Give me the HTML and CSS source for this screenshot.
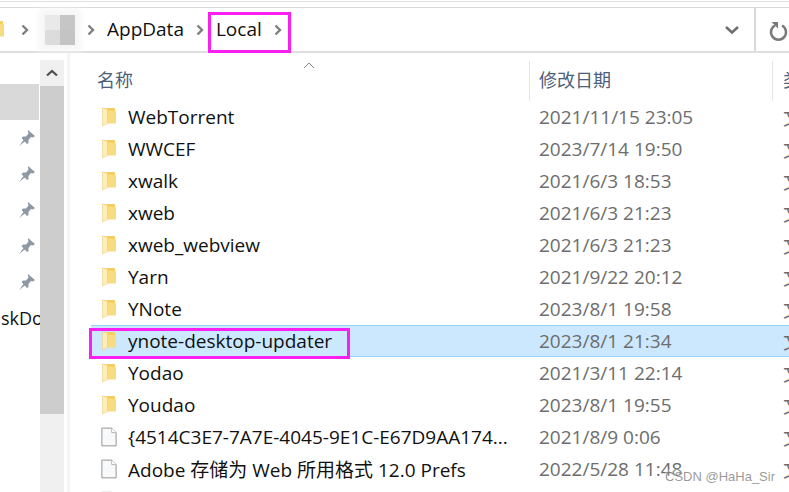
FILE: index.html
```html
<!DOCTYPE html>
<html lang="en">
<head>
  <meta charset="UTF-8" />
  <title>Local</title>
  <link rel="stylesheet" href="styles.css">
</head>
<body>
  <svg width="0" height="0" class="defs">
    <symbol id="folder" viewBox="0 0 16 20">
      <path d="M2 1h12v15H2z" fill="#f5d061"/>
      <path d="M6 4h9v12.500H6z" fill="#f8dc82"/>
      <path d="M1.500 1l5 1v14.500l-5 2.500z" fill="#fdeebc" stroke="#e8c66a" stroke-width=".5"/>
    </symbol>
    <symbol id="file" viewBox="0 0 18 22">
      <path d="M1 1h11l5 5v15H1z" fill="#f8f9fa" stroke="#8a8a8a"/>
      <path d="M12 1v5h5" fill="#fff" stroke="#b0b0b0"/>
    </symbol>
    <symbol id="pin" viewBox="0 0 16 16">
      <path d="M0 16l5-6.500 1.500 1.500zM9 0l7 6-2 1.500-2-.5-2.500 3v3L8 14 2.500 8 4 6.500h3l2.500-3L9 2z" fill="#8f99a3"/>
    </symbol>
    <symbol id="chev" viewBox="0 0 8 12">
      <path d="M1.500 1.500L6 6l-4.500 4.500" fill="none" stroke="#7f7f7f" stroke-width="2.400"/>
    </symbol>
  </svg>

  <div class="window">
    <div class="titlebar"></div>

    <div class="addressbar">
      <div class="crumbs">
        <svg class="crumb-folder" width="16" height="20"><use href="#folder"/></svg>
        <svg class="chev first" width="8" height="12"><use href="#chev"/></svg>
        <div class="blur">
          <i class="b1"></i><i class="b2"></i><i class="b3"></i><i class="b4"></i>
        </div>
        <svg class="chev" width="8" height="12"><use href="#chev"/></svg>
        <span class="crumb">AppData</span>
        <svg class="chev" width="8" height="12"><use href="#chev"/></svg>
        <span class="crumb">Local</span>
        <svg class="chev" width="8" height="12"><use href="#chev"/></svg>
      </div>
      <svg class="dropdown" width="16" height="10" viewBox="0 0 16 10"><path d="M2 2l6 5.500L14 2" fill="none" stroke="#6f6f6f" stroke-width="2.600"/></svg>
      <div class="refresh">
        <svg width="20" height="22" viewBox="0 0 20 22"><path d="M6 6.500a7.500 7.500 0 1 0 7 0" fill="none" stroke="#7a7a7a" stroke-width="2.500"/><path d="M2.500 3h6.500v6.500z" fill="#7a7a7a"/></svg>
      </div>
    </div>

    <div class="main">
      <div class="sidebar">
        <div class="side-row active"></div>
        <div class="side-row"><svg width="16" height="16"><use href="#pin"/></svg></div>
        <div class="side-row"><svg width="16" height="16"><use href="#pin"/></svg></div>
        <div class="side-row"><svg width="16" height="16"><use href="#pin"/></svg></div>
        <div class="side-row"><svg width="16" height="16"><use href="#pin"/></svg></div>
        <div class="side-row"><svg width="16" height="16"><use href="#pin"/></svg></div>
        <div class="side-row label">skDocs</div>
      </div>

      <div class="scrollbar">
        <div class="scroll-btn">
          <svg width="12" height="8" viewBox="0 0 12 8"><path d="M1 6.500L6 2l5 4.500" fill="none" stroke="#505050" stroke-width="2.200"/></svg>
        </div>
        <div class="scroll-thumb"></div>
      </div>

      <div class="list">
        <div class="list-head">
          <div class="col-name">名称
            <svg class="sort" width="12" height="7" viewBox="0 0 12 7"><path d="M1 6l5-5 5 5" fill="none" stroke="#8a8a8a"/></svg>
          </div>
          <div class="col-date">修改日期</div>
          <div class="col-type">类型</div>
        </div>

        <div class="row"><svg class="icon" width="16" height="20"><use href="#folder"/></svg><span class="name">WebTorrent</span><span class="date">2021/11/15 23:05</span><span class="type">文件夹</span></div>
        <div class="row"><svg class="icon" width="16" height="20"><use href="#folder"/></svg><span class="name">WWCEF</span><span class="date">2023/7/14 19:50</span><span class="type">文件夹</span></div>
        <div class="row"><svg class="icon" width="16" height="20"><use href="#folder"/></svg><span class="name">xwalk</span><span class="date">2021/6/3 18:53</span><span class="type">文件夹</span></div>
        <div class="row"><svg class="icon" width="16" height="20"><use href="#folder"/></svg><span class="name">xweb</span><span class="date">2021/6/3 21:23</span><span class="type">文件夹</span></div>
        <div class="row"><svg class="icon" width="16" height="20"><use href="#folder"/></svg><span class="name">xweb_webview</span><span class="date">2021/6/3 21:23</span><span class="type">文件夹</span></div>
        <div class="row"><svg class="icon" width="16" height="20"><use href="#folder"/></svg><span class="name">Yarn</span><span class="date">2021/9/22 20:12</span><span class="type">文件夹</span></div>
        <div class="row"><svg class="icon" width="16" height="20"><use href="#folder"/></svg><span class="name">YNote</span><span class="date">2023/8/1 19:58</span><span class="type">文件夹</span></div>
        <div class="row selected"><svg class="icon" width="16" height="20"><use href="#folder"/></svg><span class="name">ynote-desktop-updater</span><span class="date">2023/8/1 21:34</span><span class="type">文件夹</span></div>
        <div class="row"><svg class="icon" width="16" height="20"><use href="#folder"/></svg><span class="name">Yodao</span><span class="date">2021/3/11 22:14</span><span class="type">文件夹</span></div>
        <div class="row"><svg class="icon" width="16" height="20"><use href="#folder"/></svg><span class="name">Youdao</span><span class="date">2023/8/1 19:55</span><span class="type">文件夹</span></div>
        <div class="row"><svg class="icon" width="18" height="22"><use href="#file"/></svg><span class="name">{4514C3E7-7A7E-4045-9E1C-E67D9AA174...</span><span class="date">2021/8/9 0:06</span><span class="type">文件</span></div>
        <div class="row"><svg class="icon" width="18" height="22"><use href="#file"/></svg><span class="name">Adobe 存储为 Web 所用格式 12.0 Prefs</span><span class="date">2022/5/28 11:48</span><span class="type">文件</span></div>
        <div class="row"><svg class="icon faded" width="18" height="22"><use href="#file"/></svg></div>
      </div>
    </div>

    <div class="mark mark-local"></div>
    <div class="mark mark-row"></div>
    <div class="watermark">CSDN @HaHa_Sir</div>
  </div>
</body>
</html>
```

FILE: styles.css
```css
* {
  box-sizing: border-box;
}
html, body {
  margin: 0;
  padding: 0;
  background: #fff;
}
.defs {
  position: absolute;
}
.window {
  position: relative;
  width: 789px;
  height: 492px;
  overflow: hidden;
  display: flex;
  flex-direction: column;
  font-family: "Open Sans", "Noto Sans CJK SC", sans-serif;
  font-size: 19px;
  color: #1a1a1a;
}
.titlebar {
  height: 7px;
  margin-top: 1px;
  border-top: 1px solid #e0e0e0;
  border-bottom: 1px solid #d9d9d9;
  flex-shrink: 0;
}
.addressbar {
  height: 45px;
  display: flex;
  align-items: center;
  border-bottom: 2px solid #dedede;
  flex-shrink: 0;
}
.crumbs {
  flex: 1;
  display: flex;
  align-items: center;
  height: 100%;
}
.crumb-folder {
  margin-left: -11px;
  flex-shrink: 0;
}
.chev {
  flex-shrink: 0;
  margin: 0 12px;
}
.chev.first {
  margin: 0 16px;
}
.blur {
  width: 30px;
  height: 30px;
  display: grid;
  grid-template-columns: 1fr 1fr;
  grid-template-rows: 1fr 1fr;
  box-shadow: 0 0 6px 6px #f6f6f6;
  background: #f6f6f6;
}
.b1 { background: #e9e9e9; }
.b2 { background: #c6c6c6; }
.b3 { background: #dcdcdc; }
.b4 { background: #c4c4c4; }
.crumb {
  color: #111;
  margin-top: -2px;
}
.dropdown {
  margin-right: 14px;
}
.refresh {
  width: 35px;
  height: 100%;
  border-left: 2px solid #d9d9d9;
  padding: 11px 0 0 13px;
}
.main {
  flex: 1;
  display: flex;
  min-height: 0;
}
.sidebar {
  width: 40px;
  padding-top: 31px;
  flex-shrink: 0;
  overflow: hidden;
}
.side-row {
  height: 36px;
  width: 39px;
  display: flex;
  align-items: center;
  justify-content: flex-end;
  padding-right: 4px;
}
.side-row.active {
  background: #d9d9d9;
}
.side-row.label {
  justify-content: flex-start;
  padding: 0 0 0 1px;
  white-space: nowrap;
  color: #111;
  font-size: 18px;
}
.scrollbar {
  width: 24px;
  flex-shrink: 0;
  background: #f0f0f0;
  margin-top: 7px;
}
.scroll-btn {
  height: 26px;
  display: flex;
  align-items: center;
  justify-content: center;
}
.scroll-thumb {
  height: 328px;
  background: #cdcdcd;
}
.list {
  flex: 1;
  min-width: 0;
  border-left: 3px solid #f5f5f5;
  margin-left: 3px;
  padding-left: 21px;
  overflow: hidden;
}
.list-head {
  height: 48px;
  display: flex;
  color: #4c607a;
  font-size: 18px;
  padding-top: 8px;
}
.col-name {
  width: 439px;
  height: 40px;
  flex-shrink: 0;
  padding: 5px 0 0 6px;
  border-right: 1px solid #e5e5e5;
  position: relative;
}
.sort {
  position: absolute;
  left: 212px;
  top: 1px;
}
.col-date {
  width: 243px;
  height: 40px;
  flex-shrink: 0;
  padding: 5px 0 0 9px;
  border-right: 1px solid #e5e5e5;
}
.col-type {
  padding: 5px 0 0 10px;
  white-space: nowrap;
  flex-shrink: 0;
}
.row {
  height: 32px;
  display: flex;
  align-items: center;
  white-space: nowrap;
}
.row.selected {
  background: #cce8ff;
  border-top: 1px solid #99d1ff;
  border-bottom: 1px solid #99d1ff;
}
.icon {
  flex-shrink: 0;
  margin-left: 10px;
  width: 16px;
}
.name {
  width: 401px;
  margin-left: 11px;
  overflow: hidden;
  flex-shrink: 0;
  color: #111;
}
.date {
  width: 243px;
  flex-shrink: 0;
  padding-left: 10px;
  color: #6d6d6d;
}
.type {
  color: #6d6d6d;
  padding-left: 11px;
}
.faded {
  opacity: .4;
}
.mark {
  position: absolute;
  border: 3px solid #f81ff0;
}
.mark-local {
  left: 208px;
  top: 12px;
  width: 83px;
  height: 41px;
}
.mark-row {
  left: 89px;
  top: 328px;
  width: 261px;
  height: 31px;
}
.watermark {
  position: absolute;
  left: 665px;
  top: 469px;
  font-family: "Liberation Sans", sans-serif;
  font-size: 13px;
  color: rgba(120, 120, 120, .75);
  background: rgba(255, 255, 255, .25);
}
```
